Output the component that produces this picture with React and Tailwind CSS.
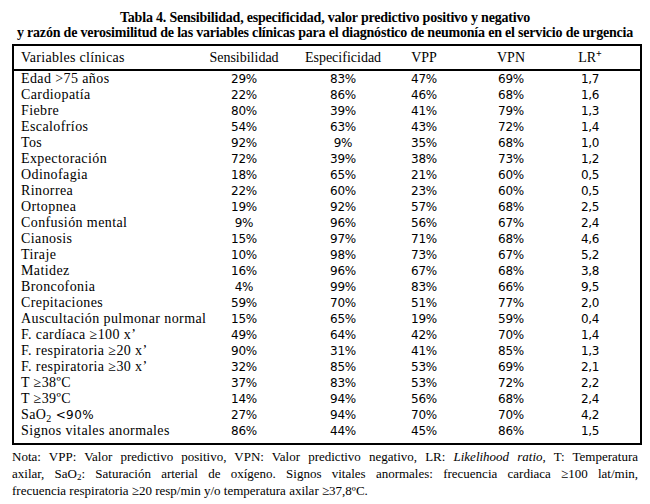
import React from 'react';

const rows = [
  ['Edad >75 años', '29%', '83%', '47%', '69%', '1,7'],
  ['Cardiopatía', '22%', '86%', '46%', '68%', '1,6'],
  ['Fiebre', '80%', '39%', '41%', '79%', '1,3'],
  ['Escalofríos', '54%', '63%', '43%', '72%', '1,4'],
  ['Tos', '92%', '9%', '35%', '68%', '1,0'],
  ['Expectoración', '72%', '39%', '38%', '73%', '1,2'],
  ['Odinofagia', '18%', '65%', '21%', '60%', '0,5'],
  ['Rinorrea', '22%', '60%', '23%', '60%', '0,5'],
  ['Ortopnea', '19%', '92%', '57%', '68%', '2,5'],
  ['Confusión mental', '9%', '96%', '56%', '67%', '2,4'],
  ['Cianosis', '15%', '97%', '71%', '68%', '4,6'],
  ['Tiraje', '10%', '98%', '73%', '67%', '5,2'],
  ['Matidez', '16%', '96%', '67%', '68%', '3,8'],
  ['Broncofonia', '4%', '99%', '83%', '66%', '9,5'],
  ['Crepitaciones', '59%', '70%', '51%', '77%', '2,0'],
  ['Auscultación pulmonar normal', '15%', '65%', '19%', '59%', '0,4'],
  ['F. cardíaca ≥100 x’', '49%', '64%', '42%', '70%', '1,4'],
  ['F. respiratoria ≥20 x’', '90%', '31%', '41%', '85%', '1,3'],
  ['F. respiratoria ≥30 x’', '32%', '85%', '53%', '69%', '2,1'],
  ['T ≥38ºC', '37%', '83%', '53%', '72%', '2,2'],
  ['T ≥39ºC', '14%', '94%', '56%', '68%', '2,4'],
  ['SaO2', '27%', '94%', '70%', '70%', '4,2'],
  ['Signos vitales anormales', '86%', '44%', '45%', '86%', '1,5'],
];

const grid = 'grid grid-cols-[190px_80px_118px_44px_130px_28px] items-center';
const serif = "font-['Liberation_Serif',serif]";
const sans = "font-['DejaVu_Sans',sans-serif]";

function Label({ text }) {
  if (text === 'SaO2') {
    return (
      <span>
        SaO<sub className="text-[10px]">2</sub> <span className={sans + ' text-[12px]'}>{'<'}90%</span>
      </span>
    );
  }
  return <span>{text}</span>;
}

export default function App() {
  return (
    <div className={`w-[650px] h-[504px] bg-white text-black ${serif} overflow-hidden`}>
      <div className="pt-[10px] text-center font-bold text-[14px] leading-[15px] tracking-[-0.2px]">
        <div>Tabla 4. Sensibilidad, especificidad, valor predictivo positivo y negativo</div>
        <div>y razón de verosimilitud de las variables clínicas para el diagnóstico de neumonía en el servicio de urgencia</div>
      </div>

      <div className="mt-[4px] ml-[12px] w-[630px] border-2 border-black pb-[4px]">
        <div className={`${grid} h-[25px] border-b-2 border-black text-[14px]`}>
          <div className="pl-[7px] tracking-[0.3px]">Variables clínicas</div>
          <div className="text-center">Sensibilidad</div>
          <div className="text-center">Especificidad</div>
          <div className="text-center">VPP</div>
          <div className="text-center">VPN</div>
          <div className="text-center">
            LR<sup className="text-[10px] font-bold">+</sup>
          </div>
        </div>
        {rows.map((r) => (
          <div key={r[0]} className={`${grid} h-[16px] leading-[16px]`}>
            <div className="pl-[7px] text-[14px] tracking-[0.4px] whitespace-nowrap">
              <Label text={r[0]} />
            </div>
            {r.slice(1).map((v, i) => (
              <div key={i} className={`${sans} text-[12px] text-center tracking-[-0.3px]`}>
                {v}
              </div>
            ))}
          </div>
        ))}
      </div>

      <div className="mt-[3px] ml-[12px] w-[626px] text-[13px] leading-[17px]">
        <p className="text-justify [text-align-last:justify]">
          Nota: VPP: Valor predictivo positivo, VPN: Valor predictivo negativo, LR: <i>Likelihood ratio</i>, T: Temperatura
        </p>
        <p className="text-justify [text-align-last:justify]">
          axilar, SaO<sub className="text-[9px]">2</sub>: Saturación arterial de oxígeno. Signos vitales anormales: frecuencia cardiaca ≥100 lat/min,
        </p>
        <p>frecuencia respiratoria ≥20 resp/min y/o temperatura axilar ≥37,8ºC.</p>
      </div>
    </div>
  );
}
